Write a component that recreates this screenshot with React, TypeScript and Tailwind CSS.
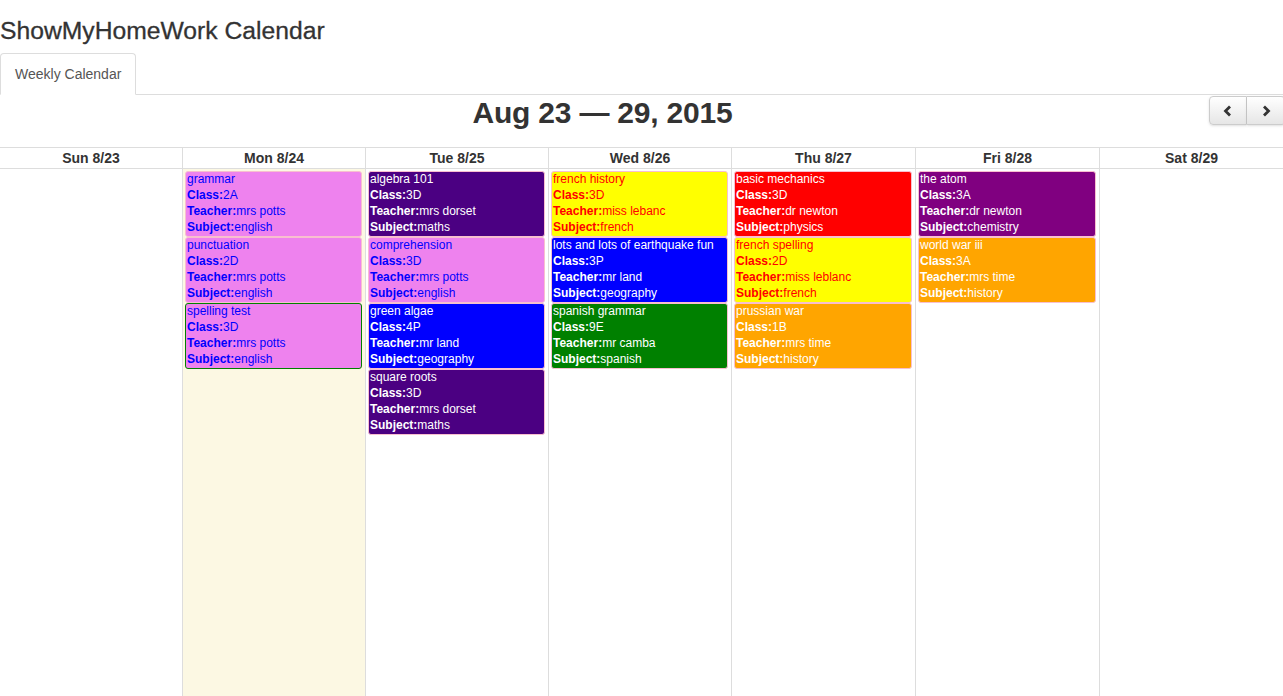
import React from "react";

const V = "bg-[#ee82ee] text-[#0000ff]";
const IND = "bg-[#4b0082] text-white";
const BLU = "bg-[#0000ff] text-white";
const YEL = "bg-[#ffff00] text-[#ff0000]";
const GRN = "bg-[#008000] text-white";
const RED = "bg-[#ff0000] text-white";
const ORG = "bg-[#ffa500] text-white";
const PUR = "bg-[#800080] text-white";

type E = { t: string; c: string; te: string; s: string; k: string; sel?: boolean };

const days: { label: string; today?: boolean; events: E[] }[] = [
  { label: "Sun 8/23", events: [] },
  {
    label: "Mon 8/24",
    today: true,
    events: [
      { t: "grammar", c: "2A", te: "mrs potts", s: "english", k: V },
      { t: "punctuation", c: "2D", te: "mrs potts", s: "english", k: V },
      { t: "spelling test", c: "3D", te: "mrs potts", s: "english", k: V, sel: true },
    ],
  },
  {
    label: "Tue 8/25",
    events: [
      { t: "algebra 101", c: "3D", te: "mrs dorset", s: "maths", k: IND },
      { t: "comprehension", c: "3D", te: "mrs potts", s: "english", k: V },
      { t: "green algae", c: "4P", te: "mr land", s: "geography", k: BLU },
      { t: "square roots", c: "3D", te: "mrs dorset", s: "maths", k: IND },
    ],
  },
  {
    label: "Wed 8/26",
    events: [
      { t: "french history", c: "3D", te: "miss lebanc", s: "french", k: YEL },
      { t: "lots and lots of earthquake fun", c: "3P", te: "mr land", s: "geography", k: BLU },
      { t: "spanish grammar", c: "9E", te: "mr camba", s: "spanish", k: GRN },
    ],
  },
  {
    label: "Thu 8/27",
    events: [
      { t: "basic mechanics", c: "3D", te: "dr newton", s: "physics", k: RED },
      { t: "french spelling", c: "2D", te: "miss leblanc", s: "french", k: YEL },
      { t: "prussian war", c: "1B", te: "mrs time", s: "history", k: ORG },
    ],
  },
  {
    label: "Fri 8/28",
    events: [
      { t: "the atom", c: "3A", te: "dr newton", s: "chemistry", k: PUR },
      { t: "world war iii", c: "3A", te: "mrs time", s: "history", k: ORG },
    ],
  },
  { label: "Sat 8/29", events: [] },
];

const COLS = "grid grid-cols-[182px_183px_183px_183px_184px_184px_1fr]";

function Chevron({ dir }: { dir: "l" | "r" }) {
  return (
    <svg width="10" height="12" viewBox="0 0 10 12" fill="none">
      <path
        d={dir === "l" ? "M7 1.5 L2.5 6 L7 10.5" : "M3 1.5 L7.5 6 L3 10.5"}
        stroke="#333"
        strokeWidth="2.8"
        strokeLinecap="butt"
        strokeLinejoin="miter"
      />
    </svg>
  );
}

export default function App() {
  return (
    <div className="h-screen overflow-hidden flex flex-col bg-white text-[#333] font-['Liberation_Sans',Arial,sans-serif]">
      <h1 className="text-[24.7px] leading-[26px] mt-[18px] mb-[9px] font-normal [-webkit-text-stroke:0.3px_#333]">ShowMyHomeWork Calendar</h1>
      <div className="flex border-b border-[#ddd] h-[42px]">
        <div className="border border-[#ddd] border-b-white -mb-px rounded-t-[4px] px-[14px] flex items-center text-[14px] text-[#555] bg-white">
          Weekly Calendar
        </div>
      </div>
      <div className="flex items-start h-[52px]">
        <div className="flex-1 flex justify-center pr-[4px]">
          <h2 className="text-[30px] leading-[33px] font-bold mt-[1px] tracking-[-0.2px]">Aug 23 — 29, 2015</h2>
        </div>
        <div className="flex mt-[1px] mr-[-2px]">
          <button className="w-[38px] h-[29px] flex items-center justify-center border border-[#ccc] rounded-l-[4px] bg-gradient-to-b from-white to-[#e6e6e6] shadow-sm">
            <Chevron dir="l" />
          </button>
          <button className="w-[38px] h-[29px] flex items-center justify-center border border-[#ccc] border-l-0 rounded-r-[4px] bg-gradient-to-b from-white to-[#e6e6e6] shadow-sm">
            <Chevron dir="r" />
          </button>
        </div>
      </div>
      <div className={`${COLS} border-t border-b border-[#ddd] h-[22px]`}>
        {days.map((d, i) => (
          <div
            key={d.label}
            className={`text-center text-[14px] leading-[20px] font-bold ${i > 0 ? "border-l border-[#ddd]" : ""}`}
          >
            {d.label}
          </div>
        ))}
      </div>
      <div className={`${COLS} flex-1`}>
        {days.map((d, i) => (
          <div
            key={d.label}
            className={`${i > 0 ? "border-l border-[#ddd]" : ""} ${d.today ? "bg-[#fcf8e3]" : ""} pt-[2px] pl-[2px] pr-[3px] flex flex-col`}
          >
            {d.events.map((e) => (
              <div
                key={e.t}
                className={`${e.k} h-[66px] rounded-[3px] border ${e.sel ? "border-[#008000]" : "border-[#f8bfcf]"} px-[1px] text-[12px] leading-[16px] overflow-hidden whitespace-nowrap`}
              >
                <div className="-mt-px">
                  <div>{e.t}</div>
                  <div>
                    <b>Class:</b>
                    {e.c}
                  </div>
                  <div>
                    <b>Teacher:</b>
                    {e.te}
                  </div>
                  <div>
                    <b>Subject:</b>
                    {e.s}
                  </div>
                </div>
              </div>
            ))}
          </div>
        ))}
      </div>
    </div>
  );
}
